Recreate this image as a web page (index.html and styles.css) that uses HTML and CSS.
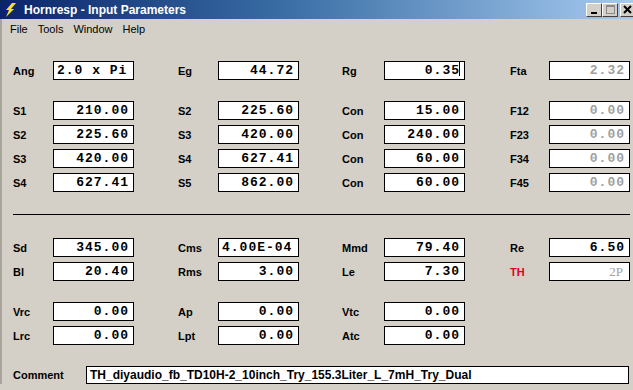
FILE: index.html
```html
<!DOCTYPE html>
<html lang="en">
<head>
    <meta charset="UTF-8">
    <title>Hornresp - Input Parameters</title>
    <link rel="stylesheet" href="styles.css">
</head>
<body>
    <div class="titlebar">
        <svg class="app-icon" width="12" height="14" viewBox="0 0 12 14">
            <polygon points="7,0 11,0 6,6 9,6 1,14 4,7 1,7" fill="#f5e61a"/>
        </svg>
        <span class="title">Hornresp - Input Parameters</span>
        <div class="caption-buttons">
            <span class="cap-btn">
                <svg width="14" height="12" viewBox="0 0 14 12"><rect x="4" y="8" width="6" height="2" fill="#000"/></svg>
            </span>
            <span class="cap-btn">
                <svg width="14" height="12" viewBox="0 0 14 12"><rect x="3.5" y="1.5" width="8" height="8" fill="none" stroke="#8a8a8a"/><rect x="3" y="1" width="9" height="2" fill="#8a8a8a"/></svg>
            </span>
            <span class="cap-btn">
                <svg width="14" height="12" viewBox="0 0 14 12"><path d="M3 2 L10 9 M10 2 L3 9" stroke="#000" stroke-width="2"/></svg>
            </span>
        </div>
    </div>

    <div class="client">
        <div class="menubar">
            <span>File</span>
            <span>Tools</span>
            <span>Window</span>
            <span>Help</span>
        </div>

        <div class="form">
            <div class="grid">
                <div class="field"><label>Ang</label><div class="val left">2.0 x Pi</div></div>
                <div class="field"><label>Eg</label><div class="val">44.72</div></div>
                <div class="field"><label>Rg</label><div class="val">0.35<span class="caret"></span></div></div>
                <div class="field"><label>Fta</label><div class="val off">2.32</div></div>
            </div>

            <div class="grid spaced">
                <div class="field"><label>S1</label><div class="val">210.00</div></div>
                <div class="field"><label>S2</label><div class="val">225.60</div></div>
                <div class="field"><label>Con</label><div class="val">15.00</div></div>
                <div class="field"><label>F12</label><div class="val off">0.00</div></div>

                <div class="field"><label>S2</label><div class="val">225.60</div></div>
                <div class="field"><label>S3</label><div class="val">420.00</div></div>
                <div class="field"><label>Con</label><div class="val">240.00</div></div>
                <div class="field"><label>F23</label><div class="val off">0.00</div></div>

                <div class="field"><label>S3</label><div class="val">420.00</div></div>
                <div class="field"><label>S4</label><div class="val">627.41</div></div>
                <div class="field"><label>Con</label><div class="val">60.00</div></div>
                <div class="field"><label>F34</label><div class="val off">0.00</div></div>

                <div class="field"><label>S4</label><div class="val">627.41</div></div>
                <div class="field"><label>S5</label><div class="val">862.00</div></div>
                <div class="field"><label>Con</label><div class="val">60.00</div></div>
                <div class="field"><label>F45</label><div class="val off">0.00</div></div>
            </div>

            <div class="divider"></div>

            <div class="grid">
                <div class="field"><label>Sd</label><div class="val">345.00</div></div>
                <div class="field"><label>Cms</label><div class="val left">4.00E-04</div></div>
                <div class="field"><label>Mmd</label><div class="val">79.40</div></div>
                <div class="field"><label>Re</label><div class="val">6.50</div></div>

                <div class="field"><label>Bl</label><div class="val">20.40</div></div>
                <div class="field"><label>Rms</label><div class="val">3.00</div></div>
                <div class="field"><label>Le</label><div class="val">7.30</div></div>
                <div class="field"><label class="red">TH</label><div class="val off thin">2P</div></div>
            </div>

            <div class="grid spaced">
                <div class="field"><label>Vrc</label><div class="val">0.00</div></div>
                <div class="field"><label>Ap</label><div class="val">0.00</div></div>
                <div class="field"><label>Vtc</label><div class="val">0.00</div></div>
                <div class="field"></div>

                <div class="field"><label>Lrc</label><div class="val">0.00</div></div>
                <div class="field"><label>Lpt</label><div class="val">0.00</div></div>
                <div class="field"><label>Atc</label><div class="val">0.00</div></div>
                <div class="field"></div>
            </div>

            <div class="comment-row">
                <label>Comment</label>
                <div class="comment">TH_diyaudio_fb_TD10H-2_10inch_Try_155.3Liter_L_7mH_Try_Dual</div>
            </div>
        </div>
    </div>
</body>
</html>
```

FILE: styles.css
```css
body {
    margin: 0;
    background: #d4d0c8;
    font-family: 'Liberation Sans', Arial, sans-serif;
    color: #000;
    overflow: hidden;
}
.titlebar {
    height: 19px;
    display: flex;
    align-items: center;
    background: linear-gradient(90deg, #0a246a 0%, #3a6ea5 45%, #a6caf0 100%);
    color: white;
}
.app-icon {
    margin-left: 5px;
    margin-right: 7px;
}
.title {
    font-weight: bold;
    font-size: 12px;
}
.caption-buttons {
    margin-left: auto;
    display: flex;
    margin-right: -3px;
}
.cap-btn {
    width: 16px;
    height: 14px;
    box-sizing: border-box;
    background: #d4d0c8;
    border: 1px solid;
    border-color: #fff #404040 #404040 #fff;
    display: flex;
    align-items: center;
    justify-content: center;
}
.cap-btn:last-child {
    margin-left: 2px;
}
.client {
    border-left: 2px solid #a9a59d;
}
.menubar {
    height: 20px;
    display: flex;
    align-items: center;
    gap: 10px;
    padding-left: 8px;
    font-size: 11px;
}
.form {
    padding: 22px 0 0 11px;
}
.grid {
    display: grid;
    grid-template-columns: 165px 164px 168px 121px;
    row-gap: 5px;
}
.spaced {
    margin-top: 21px;
}
.field {
    display: flex;
    align-items: center;
    height: 19px;
}
.field label {
    width: 40px;
    font-weight: bold;
    font-size: 11px;
}
.field:nth-child(4n+3) label { width: 42px; }
.field:nth-child(4n) label { width: 39px; }
.red { color: #e0001a; }
.val {
    position: relative;
    width: 81px;
    height: 19px;
    box-sizing: border-box;
    border: 1px solid #000;
    background: #fff;
    font-family: 'Liberation Mono', 'Courier New', monospace;
    font-weight: bold;
    font-size: 13px;
    letter-spacing: 1px;
    line-height: 17px;
    text-align: right;
    padding-right: 4px;
}
.val.left {
    text-align: left;
    padding-left: 3px;
}
.val.off { color: #a0a0a0; }
.val.thin {
    font-family: 'Liberation Serif', 'Times New Roman', serif;
    font-weight: normal;
    font-size: 13px;
    letter-spacing: 0;
    padding-right: 6px;
}
.caret {
    display: inline-block;
    width: 1px;
    height: 14px;
    background: #000;
    vertical-align: -2px;
    margin-left: -1px;
}
.divider {
    margin: 22px 3px 23px 0;
    border-top: 1px solid #000;
}
.comment-row {
    display: flex;
    align-items: center;
    margin-top: 21px;
}
.comment-row label {
    width: 73px;
    font-weight: bold;
    font-size: 11px;
}
.comment {
    width: 543px;
    height: 18px;
    box-sizing: border-box;
    border: 1px solid #000;
    background: #fff;
    font-weight: bold;
    font-size: 12px;
    line-height: 16px;
    padding-left: 3px;
}
```
